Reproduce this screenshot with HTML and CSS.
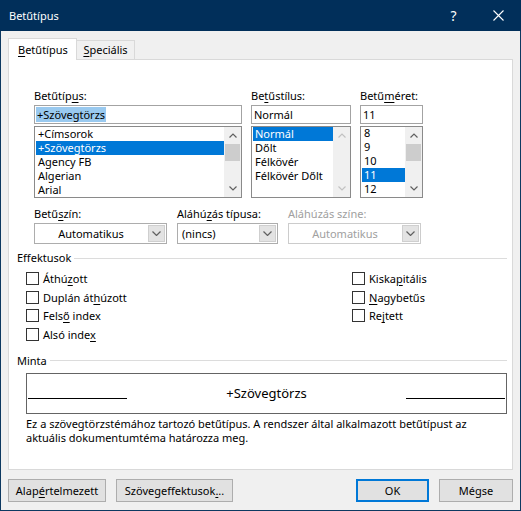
FILE: index.html
```html
<!DOCTYPE html>
<html lang="hu">
<head>
<meta charset="utf-8">
<title>Betűtípus</title>
<link rel="stylesheet" href="styles.css">
</head>
<body>
<div class="window">
  <div class="titlebar">
    <span class="title">Betűtípus</span>
    <span class="tb-btn tb-help">?</span>
    <span class="tb-btn tb-close"><svg width="11" height="11" viewBox="0 0 11 11"><path d="M0.5 0.5 L10.5 10.5 M10.5 0.5 L0.5 10.5" stroke="#fff" stroke-width="1.1" fill="none"/></svg></span>
  </div>
  <div class="client">
    <div class="tabs">
      <div class="tab active"><u>B</u>etűtípus</div>
      <div class="tab"><u>S</u>peciális</div>
    </div>
    <div class="panel">
      <div class="fontgrid">
        <div class="col">
          <div class="lbl">Betűtíp<u>u</u>s:</div>
          <div class="input"><span class="textsel">+Szövegtörzs</span></div>
          <div class="list">
            <div class="items">
              <div class="item">+Címsorok</div>
              <div class="item selected">+Szövegtörzs</div>
              <div class="item">Agency FB</div>
              <div class="item">Algerian</div>
              <div class="item">Arial</div>
            </div>
            <div class="scrollbar">
              <div class="sbtn"><svg width="8" height="5" viewBox="0 0 8 5"><path d="M0.5 4.5 L4 1 L7.5 4.5" class="chev"/></svg></div>
              <div class="track"><div class="thumb"></div></div>
              <div class="sbtn"><svg width="8" height="5" viewBox="0 0 8 5"><path d="M0.5 0.5 L4 4 L7.5 0.5" class="chev"/></svg></div>
            </div>
          </div>
        </div>
        <div class="col">
          <div class="lbl">Be<u>t</u>űstílus:</div>
          <div class="input">Normál</div>
          <div class="list">
            <div class="items">
              <div class="item selected">Normál</div>
              <div class="item">Dőlt</div>
              <div class="item">Félkövér</div>
              <div class="item">Félkövér Dőlt</div>
            </div>
            <div class="scrollbar disabled">
              <div class="sbtn"><svg width="8" height="5" viewBox="0 0 8 5"><path d="M0.5 4.5 L4 1 L7.5 4.5" class="chev"/></svg></div>
              <div class="track"></div>
              <div class="sbtn"><svg width="8" height="5" viewBox="0 0 8 5"><path d="M0.5 0.5 L4 4 L7.5 0.5" class="chev"/></svg></div>
            </div>
          </div>
        </div>
        <div class="col">
          <div class="lbl">Betű<u>m</u>éret:</div>
          <div class="input">11</div>
          <div class="list sizes">
            <div class="items">
              <div class="item">8</div>
              <div class="item">9</div>
              <div class="item">10</div>
              <div class="item selected">11</div>
              <div class="item">12</div>
            </div>
            <div class="scrollbar">
              <div class="sbtn"><svg width="8" height="5" viewBox="0 0 8 5"><path d="M0.5 4.5 L4 1 L7.5 4.5" class="chev"/></svg></div>
              <div class="track"><div class="thumb"></div></div>
              <div class="sbtn"><svg width="8" height="5" viewBox="0 0 8 5"><path d="M0.5 0.5 L4 4 L7.5 0.5" class="chev"/></svg></div>
            </div>
          </div>
        </div>
      </div>

      <div class="combogrid">
        <div class="col">
          <div class="lbl">Betű<u>s</u>zín:</div>
          <div class="combo"><span class="ctext center">Automatikus</span><span class="carrow"><svg width="9" height="5" viewBox="0 0 9 5"><path d="M0.5 0.5 L4.5 4.5 L8.5 0.5" class="chev"/></svg></span></div>
        </div>
        <div class="col">
          <div class="lbl">Aláhú<u>z</u>ás típusa:</div>
          <div class="combo"><span class="ctext">(nincs)</span><span class="carrow"><svg width="9" height="5" viewBox="0 0 9 5"><path d="M0.5 0.5 L4.5 4.5 L8.5 0.5" class="chev"/></svg></span></div>
        </div>
        <div class="col">
          <div class="lbl dis">Aláhúzás színe:</div>
          <div class="combo disabled"><span class="ctext center">Automatikus</span><span class="carrow"><svg width="9" height="5" viewBox="0 0 9 5"><path d="M0.5 0.5 L4.5 4.5 L8.5 0.5" class="chev"/></svg></span></div>
        </div>
      </div>

      <div class="section">Effektusok</div>
      <div class="checks">
        <div class="cb"><span class="box"></span><span>Áthú<u>z</u>ott</span></div>
        <div class="cb"><span class="box"></span><span>Kiska<u>p</u>itális</span></div>
        <div class="cb"><span class="box"></span><span>Duplán át<u>h</u>úzott</span></div>
        <div class="cb"><span class="box"></span><span><u>N</u>agybetűs</span></div>
        <div class="cb"><span class="box"></span><span>Fels<u>ő</u> index</span></div>
        <div class="cb"><span class="box"></span><span>Re<u>j</u>tett</span></div>
        <div class="cb"><span class="box"></span><span>Alsó inde<u>x</u></span></div>
      </div>

      <div class="section minta">Minta</div>
      <div class="preview">
        <span class="pline"></span>
        <span class="ptext">+Szövegtörzs</span>
        <span class="pline"></span>
      </div>
      <div class="desc">Ez a szövegtörzstémához tartozó betűtípus. A rendszer által alkalmazott betűtípust az<br>aktuális dokumentumtéma határozza meg.</div>
    </div>
    <div class="buttons">
      <div class="btn b-default">Alap<u>é</u>rtelmezett</div>
      <div class="btn b-effects">Szövegeffektusok<u>.</u>..</div>
      <div class="btn b-ok">OK</div>
      <div class="btn b-cancel">Mégse</div>
    </div>
  </div>
</div>
</body>
</html>
```

FILE: styles.css
```css
* { box-sizing: border-box; }
html, body { margin: 0; padding: 0; }
body {
  width: 521px;
  height: 511px;
  overflow: hidden;
  background: #f0f0f0;
  font-family: "Noto Sans", "DejaVu Sans", sans-serif;
  font-size: 11px;
  color: #000;
}
u { text-decoration-thickness: 1px; text-underline-offset: 2px; }

.window {
  width: 521px;
  height: 511px;
  display: flex;
  flex-direction: column;
  border: 1px solid #0d3961;
  border-top: none;
  background: #f0f0f0;
}

.titlebar {
  height: 31px;
  flex: none;
  display: flex;
  align-items: center;
  background: #012f5a;
  color: #fff;
  padding-left: 9px;
  margin: 0 -1px;
}
.title { flex: 1; font-size: 11px; }
.tb-btn {
  width: 45px;
  height: 31px;
  display: flex;
  align-items: center;
  justify-content: center;
}
.tb-help { font-size: 14px; }

.client {
  flex: 1;
  display: flex;
  flex-direction: column;
  padding: 7px 7px 8px 7px;
}

.tabs {
  height: 22px;
  display: flex;
  position: relative;
  z-index: 1;
}
.tab {
  height: 19px;
  width: 58px;
  margin-top: 2px;
  border-top: 1px solid #d9d9d9;
  border-right: 1px solid #d9d9d9;
  line-height: 18px;
  text-align: center;
}
.tab.active {
  height: 22px;
  width: 69px;
  margin-top: 0;
  border: 1px solid #d9d9d9;
  border-bottom: none;
  background: #fff;
  text-align: left;
  padding-left: 9px;
  line-height: 21px;
}

.panel {
  height: 411px;
  flex: none;
  margin-top: -1px;
  background: #fff;
  border: 1px solid #d9d9d9;
  padding: 28px 5px 0 8px;
}

.lbl { height: 16px; line-height: 16px; margin-bottom: 1px; white-space: nowrap; }
.lbl.dis { color: #a0a0a0; }

.fontgrid {
  margin-left: 17px;
  display: grid;
  grid-template-columns: 208px 100px 63px;
  column-gap: 9px;
}
.input {
  height: 19px;
  border: 1px solid #a3a3a3;
  line-height: 17px;
  padding-left: 2px;
  white-space: nowrap;
}
.textsel { background: #99c9ef; padding: 0 1px; margin-left: -1px; }

.list {
  margin-top: 2px;
  height: 72px;
  border: 1px solid #8a8a8a;
  display: flex;
}
.items { flex: 1; padding: 0 0 0 1px; overflow: hidden; }
.item { height: 14px; line-height: 14px; padding-left: 2px; white-space: nowrap; }
.list.sizes .items { margin-top: -1px; }
.item.selected { background: #0078d7; color: #fff; }

.scrollbar {
  width: 17px;
  flex: none;
  display: flex;
  flex-direction: column;
  background: #f0f0f0;
}
.sbtn {
  height: 17px;
  display: flex;
  align-items: center;
  justify-content: center;
}
.track { flex: 1; }
.thumb { height: 17px; background: #cdcdcd; margin: 0 1px; }
.chev { fill: none; stroke: #606060; stroke-width: 1.2; }
.scrollbar.disabled .chev { stroke: #c2c2c2; }

.combogrid {
  margin-left: 17px;
  margin-top: 8px;
  display: grid;
  grid-template-columns: 133px 101px 133px;
  column-gap: 10px;
}
.combo {
  height: 21px;
  border: 1px solid #adadad;
  display: flex;
  background: #fff;
}
.ctext { flex: 1; line-height: 19px; padding-left: 4px; white-space: nowrap; }
.ctext.center { text-align: center; padding-left: 0; }
.carrow {
  width: 17px;
  margin: 1px;
  background: #e3e3e3;
  border: 1px solid #cfcfcf;
  display: flex;
  align-items: center;
  justify-content: center;
}
.combo.disabled { border-color: #cccccc; }
.combo.disabled .ctext { color: #a0a0a0; }

.section {
  margin-top: 6px;
  height: 16px;
  line-height: 16px;
  display: flex;
  align-items: center;
  gap: 3px;
}
.section::after {
  content: "";
  flex: 1;
  border-top: 1px solid #dcdcdc;
}
.section.minta { margin-top: 9px; }

.checks {
  margin-top: 3px;
  margin-left: 9px;
  display: grid;
  grid-template-columns: 326px 1fr;
  grid-auto-rows: 18.7px;
}
.cb { display: flex; align-items: center; gap: 4px; }
.box {
  width: 13px;
  height: 13px;
  border: 1px solid #333;
  background: #fff;
  flex: none;
}

.preview {
  margin-top: 4px;
  margin-left: 9px;
  width: 481px;
  height: 41px;
  border: 1px solid #646464;
  display: flex;
  align-items: flex-start;
  padding: 0 1px;
}
.pline {
  width: 99px;
  height: 25px;
  border-bottom: 1px solid #000;
  flex: none;
}
.ptext {
  flex: 1;
  text-align: center;
  font-size: 13px;
  line-height: 18px;
  margin-top: 10px;
}

.desc {
  margin-top: 3px;
  margin-left: 9px;
  line-height: 14px;
  white-space: nowrap;
}

.buttons {
  margin-top: 9px;
  height: 23px;
  display: flex;
  gap: 10px;
}
.btn {
  height: 23px;
  border: 1px solid #adadad;
  background: #e1e1e1;
  text-align: center;
  line-height: 21px;
  white-space: nowrap;
}
.b-default { width: 98px; }
.b-effects { width: 117px; }
.b-ok { width: 73px; margin-left: auto; border: 2px solid #0078d7; line-height: 19px; }
.b-cancel { width: 74px; }
```
